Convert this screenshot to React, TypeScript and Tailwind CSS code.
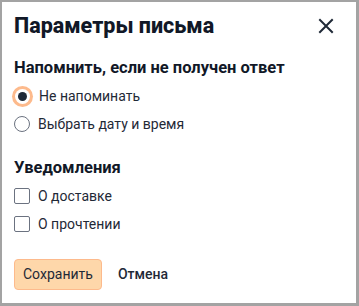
import React from "react";

export default function App() {
  return (
    <div className="w-[359px] h-[306px] bg-[#a3a3a3] p-[2px] pr-[3px] pb-[3px]" style={{ fontFamily: "Roboto, 'Noto Sans', sans-serif" }}>
      <div className="w-full h-full bg-white flex flex-col px-3 text-[#1f2937]">
        <div className="flex items-center justify-between h-[44px] pt-[4px]">
          <span className="text-[21.5px] font-[800] text-[#111827]">Параметры письма</span>
          <svg width="16" height="16" viewBox="0 0 16 16" className="mr-[10px]">
            <path d="M2 2 L14 14 M14 2 L2 14" stroke="#1f2937" strokeWidth="2" strokeLinecap="square" />
          </svg>
        </div>
        <div className="mt-[12px] text-[16.5px] font-bold text-[#111827] leading-5">Напомнить, если не получен ответ</div>
        <div className="mt-[8px] flex flex-col gap-[8px]">
          <label className="flex items-center gap-[9px] h-[20px] text-[14px]">
            <span className="w-[15px] h-[15px] rounded-full bg-white flex items-center justify-center ring-[3px] ring-[#fdba8c] ml-[1px]">
              <span className="w-[9px] h-[9px] rounded-full bg-[#1f2937]" />
            </span>
            Не напоминать
          </label>
          <label className="flex items-center gap-[8px] h-[20px] text-[14px]">
            <span className="w-[16px] h-[16px] rounded-full border-[1.5px] border-[#6b7280]" />
            Выбрать дату и время
          </label>
        </div>
        <div className="mt-[24px] text-[16.5px] font-bold text-[#111827] leading-5">Уведомления</div>
        <div className="mt-[8px] flex flex-col gap-[8px]">
          <label className="flex items-center gap-[8px] h-[20px] text-[14px]">
            <span className="w-[16px] h-[16px] rounded-[2px] border-[1.5px] border-[#6b7280]" />
            О доставке
          </label>
          <label className="flex items-center gap-[8px] h-[20px] text-[14px]">
            <span className="w-[16px] h-[16px] rounded-[2px] border-[1.5px] border-[#6b7280]" />
            О прочтении
          </label>
        </div>
        <div className="mt-[25px] flex items-center gap-[8px]">
          <button className="h-[31px] px-[8px] rounded-[4px] bg-[#fed7aa] border border-[#fdba8c] text-[14px] text-[#1f2937]">Сохранить</button>
          <button className="h-[31px] px-[8px] text-[14px] font-medium text-[#1f2937]">Отмена</button>
        </div>
      </div>
    </div>
  );
}
